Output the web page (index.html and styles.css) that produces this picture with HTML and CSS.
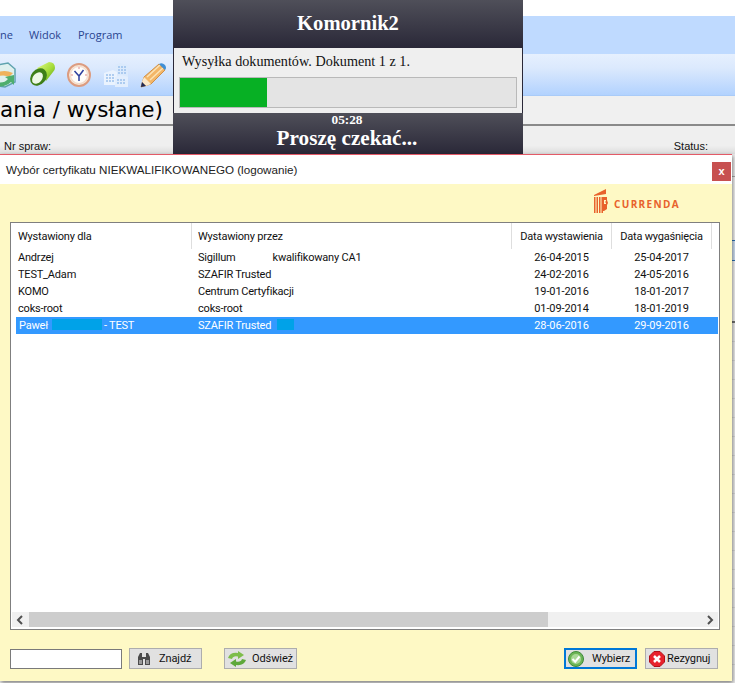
FILE: index.html
```html
<!DOCTYPE html>
<html lang="pl">
<head>
<meta charset="utf-8">
<title>Komornik2</title>
<link rel="stylesheet" href="styles.css">
</head>
<body>
<div class="desktop">
  <div class="app">
    <div class="top-gap"></div>
    <nav class="menu"><span class="m-first">ne</span><span class="m-widok">Widok</span><span class="m-prog">Program</span></nav>
    <div class="toolbar">
      <svg class="tool tool-first" viewBox="0 0 16 26"><path d="M-8 4 8 1 15 7 15 20 5 25-8 23Z" fill="#dff0ee" stroke="#5fa3ae" stroke-width="1.500"/><path d="M-6 13 Q2 6 13 11 L9 15 Q2 11-6 17Z" fill="#efb25c"/><path d="M-4 20 Q4 22 8 17 L5 15 14 13 14 23 11 20 Q3 27-6 23Z" fill="#4fae6e"/></svg>
      <svg class="tool tool-flash" viewBox="0 0 26 26"><defs><linearGradient id="gl" x1="0" y1="0" x2="1" y2="1"><stop offset="0" stop-color="#e2fa8a"/><stop offset=".55" stop-color="#a5dc3a"/><stop offset="1" stop-color="#5a9f16"/></linearGradient></defs><path d="M8 6 20 0 Q26 0 26 6 Q26 8 24 10 L17 19Z" fill="url(#gl)"/><ellipse cx="9.500" cy="15" rx="7.500" ry="9.500" transform="rotate(40 9.500 15)" fill="#3e7f18"/><ellipse cx="8.500" cy="16" rx="4.500" ry="6.500" transform="rotate(40 8.500 16)" fill="#eef8e6"/></svg>
      <svg class="tool tool-clock" viewBox="0 0 24 26"><circle cx="12" cy="13" r="11" fill="#f8e6d6" stroke="#dc9c80" stroke-width="2"/><circle cx="12" cy="13" r="8.500" fill="#fffdfa" stroke="#eed3c2" stroke-width=".8"/><path d="M7.500 9 12 14 16.500 8M12 14V19" fill="none" stroke="#2c3f9e" stroke-width="1.500"/><path d="M12 5v2M20 13h-2M4 13h2" stroke="#e08a8a"/></svg>
      <svg class="tool tool-bld" viewBox="0 0 26 26"><path d="M12 3 17 1 25 3V18H12Z" fill="#dbeafc"/><path d="M1 11 10 8 14 10V23H1Z" fill="#eaf3fe"/><path d="M12 15 18 13 25 15V25H12Z" fill="#e2eefd"/><path d="M3 13h9M3 16h9M3 19h9M15 5h8M15 8h8M15 11h8M14 18h9M14 21h9" stroke="#9cc1ec" stroke-width="1.500" stroke-dasharray="2 1"/></svg>
      <svg class="tool tool-pencil" viewBox="0 0 27 26"><path d="M1 25 4 15 19 2 25 8 11 22Z" fill="#f3b667" stroke="#c9802f" stroke-width=".8"/><path d="M7 15 20 3M10 18 23 6" stroke="#fbe3b4" stroke-width="1.500"/><path d="M19 2 Q22 0 25 3 Q27 6 25 8Z" fill="#3f8fd6"/><path d="M4 15 11 22 6 24 2 20Z" fill="#fbe8c8"/><path d="M1 25 2 20 6 24Z" fill="#1f2a55"/></svg>
    </div>
    <h1 class="doc-title">ania / wysłane)</h1>
    <div class="filters"><span>Nr spraw:</span><span>Status:</span></div>
    <div class="grid-head"></div>
    <div class="grid-gap"></div>
    <div class="grid-row-active"></div>
    <div class="grid-gap-b"></div>
    <div class="grid-rows"></div>
  </div>

  <section class="progress-win">
    <header class="pw-head">Komornik2</header>
    <div class="pw-body">
      <p class="pw-msg">Wysyłka dokumentów. Dokument 1 z 1.</p>
      <div class="bar"><div class="bar-fill"></div></div>
    </div>
    <footer class="pw-foot"><div class="pw-time">05:28</div><div class="pw-wait">Proszę czekać...</div></footer>
  </section>

  <section class="dialog">
    <header class="dlg-title"><span>Wybór certyfikatu NIEKWALIFIKOWANEGO (logowanie)</span><button class="close">x</button></header>
    <div class="dlg-body">
      <div class="logo-row">
        <svg class="logo-mark" viewBox="0 0 14 24"><path d="M0 6 12 0V5L0 7Z" fill="#e8622c"/><path d="M0 8h1.500v16H0ZM2.500 8h1.500v16H2.500ZM5 8h1.500v16H5ZM7.500 8h1.500v16H7.500Z" fill="#e8622c"/><path d="M9 8h4v3l1 3-1 2v4l-3 2H9Z" fill="#e8622c"/><path d="M10 11h2v1.500h-1v1h1V15h-2Z" fill="#fef9c5"/></svg>
        <span class="logo-text">CURRENDA</span>
      </div>
      <div class="list">
        <div class="thead">
          <div class="th">Wystawiony dla</div>
          <div class="th">Wystawiony przez</div>
          <div class="th center">Data wystawienia</div>
          <div class="th center">Data wygaśnięcia</div>
        </div>
        <div class="rows">
          <div class="row"><div>Andrzej</div><div>Sigillum<span class="gap"></span>kwalifikowany CA1</div><div class="center">26-04-2015</div><div class="center">25-04-2017</div></div>
          <div class="row"><div>TEST_Adam</div><div>SZAFIR Trusted</div><div class="center">24-02-2016</div><div class="center">24-05-2016</div></div>
          <div class="row"><div>KOMO</div><div>Centrum Certyfikacji</div><div class="center">19-01-2016</div><div class="center">18-01-2017</div></div>
          <div class="row"><div>coks-root</div><div>coks-root</div><div class="center">01-09-2014</div><div class="center">18-01-2019</div></div>
          <div class="row selected"><div>Paweł<span class="mask mask-a"></span>- TEST</div><div>SZAFIR Trusted<span class="mask mask-b"></span></div><div class="center">28-06-2016</div><div class="center">29-09-2016</div></div>
        </div>
        <div class="hscroll">
          <svg class="chev" viewBox="0 0 8 10"><path d="M6 1 2 5 6 9" fill="none" stroke="#505050" stroke-width="2"/></svg>
          <div class="track"><div class="thumb"></div></div>
          <svg class="chev" viewBox="0 0 8 10"><path d="M2 1 6 5 2 9" fill="none" stroke="#505050" stroke-width="2"/></svg>
        </div>
      </div>
      <div class="actions">
        <input class="search" type="text" aria-label="Szukaj">
        <button class="btn btn-find"><svg class="ico ico-find" viewBox="1 0 14 13"><path d="M2 5 4 1H6V5H10V1H12L14 5V13H9V7H7V13H2Z" fill="#4b4b4b"/><path d="M3 8h3v4H3ZM10 8h3v4h-3Z" fill="#9a9a9a"/></svg><span>Znajdź</span></button>
        <button class="btn btn-refresh"><svg class="ico ico-wide" viewBox="0 0 20 16"><path d="M1 7 Q3 1 11 2 V0 L17 4 11 8 V5.500 Q6 4.500 5 8Z" fill="#7dbd4a"/><path d="M19 9 Q17 15 9 14 V16 L3 12 9 8 V10.500 Q14 11.500 15 8Z" fill="#5ea83a"/></svg><span>Odśwież</span></button>
        <div class="spacer"></div>
        <button class="btn btn-primary"><svg class="ico ico-ok" viewBox="0 0 16 16"><circle cx="8" cy="8" r="7.500" fill="#6db556" stroke="#3f8a3a"/><circle cx="8" cy="8" r="5" fill="#a9d897"/><path d="M4.500 8 7.200 10.700 11.500 5.500" fill="none" stroke="#fff" stroke-width="2"/></svg><span>Wybierz</span></button>
        <button class="btn btn-cancel"><svg class="ico ico-x" viewBox="0 0 16 16"><path d="M5 .5H11L15.500 5V11L11 15.500H5L.5 11V5Z" fill="#e8222c" stroke="#b01018"/><path d="M5 5 11 11M11 5 5 11" stroke="#fff" stroke-width="2.500"/></svg><span>Rezygnuj</span></button>
      </div>
    </div>
  </section>
</div>
</body>
</html>
```

FILE: styles.css
```css
html, body { margin: 0; padding: 0; background: #fff; }
.desktop { position: relative; width: 735px; height: 683px; overflow: hidden; font-family: "Liberation Sans", Arial, sans-serif; font-size: 12px; color: #111; }

.app { display: flex; flex-direction: column; height: 683px; background: #f0f0f0; }
.top-gap { height: 16px; background: #fff; }
.menu { height: 38px; flex: none; background: #bfdaff; display: flex; align-items: center; font-family: "Open Sans", sans-serif; font-size: 11px; color: #2a4490; box-sizing: border-box; padding-bottom: 1px; }
.m-first { width: 29px; }
.m-widok { width: 49px; }
.toolbar { height: 42px; flex: none; box-sizing: border-box; background: linear-gradient(#e6f0fe, #dbe9fd 35%, #b2d2fe); display: flex; align-items: center; border-bottom: 1px solid #a9cbf8; }
.tool { display: block; flex: none; height: 26px; }
.tool-first { width: 16px; margin-right: 13px; }
.tool-flash { width: 26px; margin-right: 12px; }
.tool-clock { width: 24px; margin-right: 12px; }
.tool-bld { width: 26px; margin-right: 11px; }
.tool-pencil { width: 27px; }
.doc-title { height: 28px; margin: 0; flex: none; background: #f0f0f0; font-family: "DejaVu Sans", sans-serif; font-weight: 400; font-size: 21.5px; line-height: 27px; color: #000; white-space: nowrap; border-bottom: 2px solid #8a8a8a; box-sizing: content-box; }
.filters { height: 28px; flex: none; box-sizing: border-box; display: flex; justify-content: space-between; padding: 14px 27px 0 4px; background: linear-gradient(#efefef 70%, #dcdcdc); font-size: 11px; line-height: 13px; }
.grid-head { height: 23px; flex: none; box-sizing: border-box; border-bottom: 1px solid #a8a8a8; background: #ececec; }
.grid-gap { height: 63px; flex: none; background: #f2f2f2; }
.grid-row-active { height: 21px; flex: none; box-sizing: border-box; border: solid #2a6fb5; border-width: 1px 0; background: #cfdff2; }
.grid-gap-b { height: 62px; flex: none; box-sizing: border-box; background: #f2f2f2; border-bottom: 2px solid #707070; }
.grid-rows { flex: 1; background: repeating-linear-gradient(#ececec 0 18px, #d8d8d8 18px 19px); }

.progress-win { position: absolute; left: 173px; top: 0; width: 350px; height: 154px; display: flex; flex-direction: column; font-family: "Liberation Serif", "Times New Roman", serif; color: #fff; font-weight: 700; background: #2a2838; }
.pw-head { height: 48px; flex: none; text-align: center; font-size: 20.6px; line-height: 46px; background: linear-gradient(#4f4f59, #2a2838); }
.pw-body { height: 65px; flex: none; margin-left: 1px; margin-right: 1px; background: #efefef; color: #111; font-weight: 400; box-sizing: border-box; padding: 4px 5px 0; }
.pw-msg { margin: 0 0 0 3px; font-size: 14.2px; line-height: 18px; height: 25px; }
.bar { height: 31px; box-sizing: border-box; border: 1px solid #b9b9b9; background: #e4e4e4; }
.bar-fill { width: 87px; height: 100%; background: #07b024; }
.pw-foot { flex: 1; text-align: center; background: linear-gradient(#4f4f59, #2a2838); }
.pw-time { font-size: 13.3px; line-height: 14px; margin-right: 2px; }
.pw-wait { font-size: 21.2px; line-height: 22px; margin-right: 2px; }

.dialog { position: absolute; left: 0; top: 154px; width: 732px; height: 526px; display: flex; flex-direction: column; background: #fef9c5; border-top: 1px solid #e35a67; box-shadow: 1px 2px 4px rgba(0,0,0,.45); }
.dlg-title { height: 29px; flex: none; background: #fff; display: flex; justify-content: space-between; padding: 0 1px 0 6px; font-size: 11.65px; line-height: 30px; color: #222; }
.close { width: 19px; height: 19px; margin: 7px 0 0; padding: 0; border: 0; background: #c75050; color: #fff; font: 700 11px/17px "Liberation Sans", sans-serif; }
.dlg-body { flex: 1; display: flex; flex-direction: column; padding: 0 12px 0 10px; min-height: 0; }
.logo-row { height: 38px; flex: none; display: flex; justify-content: flex-end; align-items: flex-start; gap: 6px; padding: 5px 40px 0 0; box-sizing: border-box; }
.logo-mark { width: 14px; height: 24px; display: block; }
.logo-text { color: #e8622c; font-family: "Open Sans", sans-serif; font-weight: 700; font-size: 10px; letter-spacing: 1.35px; line-height: 14px; margin-top: 8px; }

.list { height: 408px; flex: none; box-sizing: border-box; border: 1px solid #7f7f7f; background: #fff; display: flex; flex-direction: column; padding: 0 1px 2px; font-family: Roboto, sans-serif; font-size: 11px; letter-spacing: -.2px; color: #111; }
.thead { display: grid; grid-template-columns: 180px 320px 100px 100px; height: 26px; flex: none; }
.th { border-right: 1px solid #dedede; padding-left: 6px; line-height: 27px; height: 26px; box-sizing: border-box; }
.th.center { padding-left: 0; text-align: center; }
.rows { flex: 1; padding-left: 4px; }
.row { display: grid; grid-template-columns: 175px 320px 100px 100px; height: 17px; line-height: 17px; align-items: center; }
.row > div:first-child { padding-left: 2px; }
.row > div:nth-child(2) { padding-left: 7px; }
.row > div { white-space: nowrap; }
.row > .center { padding-left: 1px; letter-spacing: -.1px; }
.center { text-align: center; }
.gap { display: inline-block; width: 37px; }
.selected { background: #3399ff; color: #fff; }
.selected > div:first-child { padding-left: 3px; }
.mask { display: inline-block; height: 11px; vertical-align: -1px; background: #00a2e8; }
.mask-a { width: 50px; margin: 0 2px 0 4px; }
.mask-b { width: 17px; margin-left: 6px; }

.hscroll { height: 15px; flex: none; display: flex; align-items: center; background: #f0f0f0; }
.chev { width: 8px; height: 10px; flex: none; margin: 0 4px; }
.track { flex: 1; height: 100%; margin-left: 1px; }
.thumb { width: 519px; height: 100%; background: #cdcdcd; }

.actions { display: flex; align-items: flex-start; padding-top: 18px; }
.search { width: 112px; height: 20px; margin: 1px 7px 0 0; padding: 0; box-sizing: border-box; border: 1px solid #7a7a7a; background: #fff; }
.btn { display: flex; align-items: center; justify-content: flex-start; width: 73px; height: 21px; padding: 0 0 0 7px; box-sizing: border-box; border: 1px solid #adadad; background: #e1e1e1; font: 11px Roboto, sans-serif; letter-spacing: -.1px; color: #111; }
.ico { width: 16px; height: 14px; display: block; flex: none; margin-right: 6px; }
.ico-find { width: 14px; height: 13px; margin-right: 8px; }
.btn-refresh { margin-left: 22px; padding-left: 2px; }
.ico-wide { width: 20px; height: 16px; margin-right: 5px; }
.spacer { flex: 1; }
.btn-primary { border: 2px solid #0078d7; margin-right: 8px; padding-left: 2px; }
.ico-ok { width: 16px; height: 16px; margin-right: 8px; }
.btn-cancel { padding-left: 3px; margin-right: 2px; }
.ico-x { width: 16px; height: 16px; margin-right: 2px; }
```
